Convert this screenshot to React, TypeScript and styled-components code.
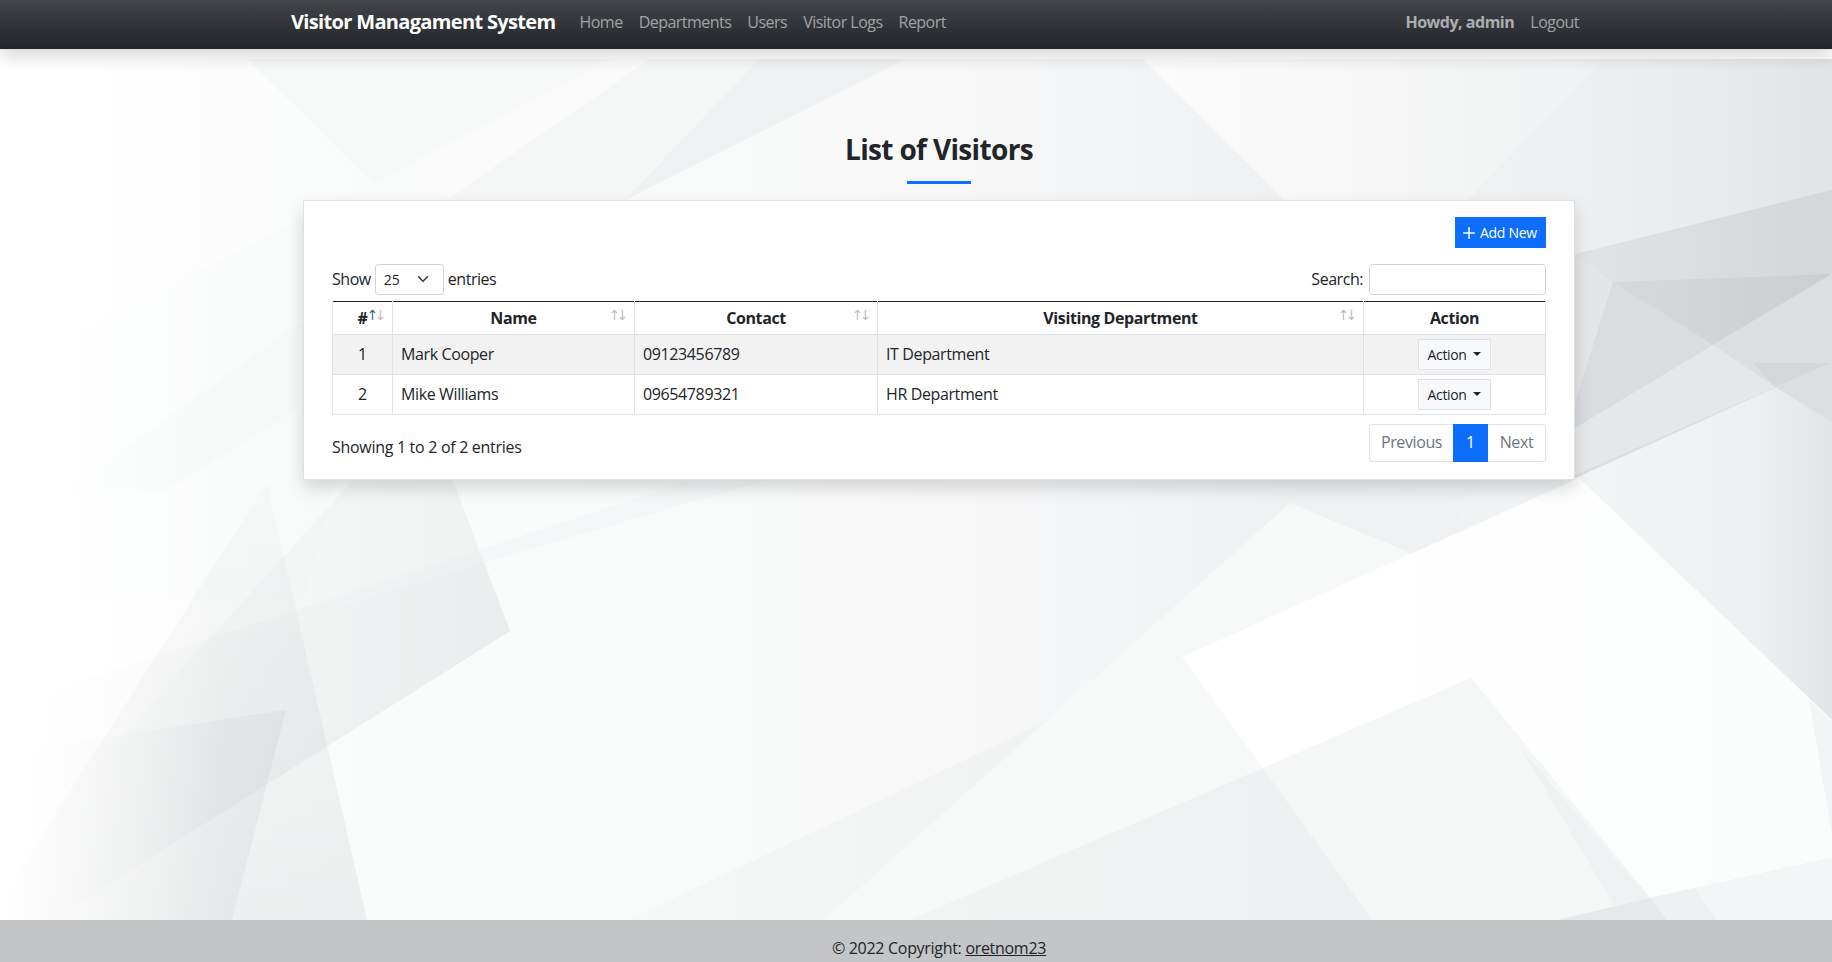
import React from 'react';
import styled, { createGlobalStyle } from 'styled-components';
import { Plus } from 'lucide-react';

const GlobalStyle = createGlobalStyle`
  html, body {
    margin: 0;
    padding: 0;
    height: 100%;
    overflow: hidden;
    background: #ffffff;
  }
  body {
    font-family: "Open Sans", "Noto Sans", "Liberation Sans", sans-serif;
    font-size: 16px;
    line-height: 24px;
    letter-spacing: -0.38px;
    color: #212529;
  }
`;

const Page = styled.div`
  display: flex;
  flex-direction: column;
  height: 962px;
  overflow: hidden;
`;

const Navbar = styled.nav`
  position: relative;
  z-index: 2;
  box-sizing: border-box;
  flex: 0 0 49px;
  display: flex;
  align-items: center;
  padding: 0 253px 6px 291px;
  background: #212529 linear-gradient(180deg, rgba(255, 255, 255, 0.15), rgba(255, 255, 255, 0));
  box-shadow: 0 8px 16px rgba(0, 0, 0, 0.15);
`;

const Brand = styled.a`
  color: #ffffff;
  font-size: 20px;
  font-weight: 700;
  letter-spacing: -0.66px;
  margin-right: 24px;
`;

const NavLinks = styled.div`
  display: flex;
  flex: 1;
  gap: 16px;
`;

const NavLink = styled.a`
  color: rgba(255, 255, 255, 0.55);
  letter-spacing: -0.52px;
`;

const Greeting = styled.span`
  color: rgba(255, 255, 255, 0.6);
  font-weight: 700;
  margin-right: 16px;
  letter-spacing: -0.48px;
`;

const Main = styled.main`
  position: relative;
  flex: 1;
  padding: 83px 0 0 303px;
`;

const Backdrop = styled.svg`
  position: absolute;
  left: 0;
  top: 10px;
  width: 1832px;
  height: 861px;
`;

const Content = styled.div`
  position: relative;
  width: 1272px;
`;

const Title = styled.h3`
  margin: 0;
  text-align: center;
  font-size: 28px;
  line-height: 34px;
  font-weight: 700;
  letter-spacing: -0.66px;
`;

const TitleRule = styled.div`
  width: 64px;
  height: 3px;
  margin: 15px auto 16px;
  background: #0d6efd;
`;

const Card = styled.section`
  box-sizing: border-box;
  height: 280px;
  padding: 16px 28px 0;
  background: #ffffff;
  border: 1px solid rgba(0, 0, 0, 0.125);
  box-shadow: 0 8px 16px rgba(0, 0, 0, 0.15);
`;

const CardTools = styled.div`
  display: flex;
  justify-content: flex-end;
  margin-bottom: 16px;
`;

const AddButton = styled.button`
  display: inline-flex;
  align-items: center;
  gap: 2px;
  box-sizing: border-box;
  width: 91px;
  height: 31px;
  padding: 0 0 0 5px;
  border: 0;
  background: #0d6efd;
  color: #ffffff;
  font: inherit;
  font-size: 14px;
  letter-spacing: -0.3px;
`;

const FilterRow = styled.div`
  display: flex;
  justify-content: space-between;
  align-items: center;
  margin-bottom: 6px;
`;

const FilterLabel = styled.label`
  display: flex;
  align-items: center;
  gap: 4px;
  padding-bottom: 2px;
  letter-spacing: -0.46px;
`;

const SelectWrap = styled.span`
  position: relative;
  display: block;
  width: 69px;
  height: 31px;
  margin-bottom: -2px;
`;

const PageSize = styled.select`
  box-sizing: border-box;
  display: block;
  width: 100%;
  height: 100%;
  padding: 0 0 0 8px;
  appearance: none;
  background: #ffffff;
  border: 1px solid #ced4da;
  border-radius: 3.2px;
  color: #212529;
  font: inherit;
  font-size: 14px;
`;

const Chevron = styled.svg`
  position: absolute;
  right: 13px;
  top: 9px;
  width: 16px;
  height: 12px;
  pointer-events: none;
`;

const SearchInput = styled.input`
  box-sizing: border-box;
  width: 177px;
  height: 31px;
  margin: 0 0 -2px 2px;
  background: #ffffff;
  border: 1px solid #ced4da;
  border-radius: 3.2px;
`;

const Table = styled.table`
  box-sizing: border-box;
  width: 1213px;
  table-layout: fixed;
  border-collapse: collapse;
  border-top: 1px solid #212529;
`;

const HeadCell = styled.th<{ $w: number; $sortable?: boolean; $active?: boolean }>`
  position: relative;
  box-sizing: border-box;
  width: ${(p) => p.$w}px;
  height: 33px;
  padding: 0 8px;
  border: 1px solid #dee2e6;
  border-top: 0;
  background: #ffffff;
  font-weight: 700;
  text-align: center;
  ${(p) =>
    p.$sortable &&
    `
    &::before, &::after {
      position: absolute;
      top: 0;
      font-family: "DejaVu Sans", sans-serif;
      font-weight: 400;
      font-size: 14px;
      line-height: 26px;
      letter-spacing: 0;
    }
    &::before {
      content: "\\2191";
      right: 13.6px;
      opacity: ${p.$active ? 0.9 : 0.3};
      color: ${p.$active ? '#1f5d7a' : 'inherit'};
    }
    &::after {
      content: "\\2193";
      right: 5.6px;
      opacity: 0.3;
    }
  `}
`;

const BodyRow = styled.tr<{ $striped?: boolean }>`
  background: ${(p) => (p.$striped ? '#f2f2f2' : '#ffffff')};
`;

const Cell = styled.td<{ $center?: boolean; $button?: boolean }>`
  box-sizing: border-box;
  height: 40px;
  padding: 0 8px ${(p) => (p.$button ? '0' : '2px')};
  border: 1px solid #dee2e6;
  text-align: ${(p) => (p.$center ? 'center' : 'left')};
  vertical-align: middle;
`;

const ActionButton = styled.button`
  display: inline-flex;
  align-items: center;
  justify-content: center;
  gap: 7px;
  box-sizing: border-box;
  width: 73px;
  height: 31px;
  padding: 0;
  vertical-align: middle;
  background: #f8f9fa;
  border: 1px solid #dee2e6;
  color: #212529;
  font: inherit;
  font-size: 14px;
  letter-spacing: -0.38px;
  &::after {
    content: "";
    margin-bottom: 2px;
    border-top: 4.5px solid currentColor;
    border-left: 4px solid transparent;
    border-right: 4px solid transparent;
  }
`;

const TableFooter = styled.div`
  display: flex;
  justify-content: space-between;
  align-items: flex-start;
  margin-top: 9px;
`;

const Info = styled.div`
  padding-top: 11px;
  letter-spacing: -0.3px;
`;

const Pager = styled.div`
  display: flex;
  height: 38px;
`;

const PageLink = styled.a<{ $w: number; $active?: boolean; $pos?: 'first' | 'last' }>`
  box-sizing: border-box;
  display: flex;
  align-items: center;
  justify-content: center;
  width: ${(p) => p.$w}px;
  padding-bottom: 2px;
  color: ${(p) => (p.$active ? '#ffffff' : '#6c757d')};
  background: ${(p) => (p.$active ? '#0d6efd' : '#ffffff')};
  border: 1px solid ${(p) => (p.$active ? '#0d6efd' : '#dee2e6')};
  border-left-width: ${(p) => (p.$pos === 'last' ? 0 : '1px')};
  border-right-width: ${(p) => (p.$pos === 'first' ? 0 : '1px')};
  border-radius: ${(p) =>
    p.$pos === 'first' ? '4px 0 0 4px' : p.$pos === 'last' ? '0 4px 4px 0' : '0'};
`;

const Footer = styled.footer`
  position: relative;
  flex: 0 0 42px;
  box-sizing: border-box;
  padding: 16px 0 0 303px;
  background: #c4c5c7;
`;

const FooterText = styled.div`
  width: 1272px;
  text-align: center;
  letter-spacing: -0.3px;
  a {
    color: inherit;
    text-decoration: underline;
  }
`;

const shapes: [string, string][] = [
  // top of the page
  ['247,59 612,59 400,210 390,200', '#f7f8f8'],
  ['650,59 759,59 625,200 446,200', '#f5f6f6'],
  ['759,59 906,59 625,200', '#f0f1f2'],
  ['612,59 650,59 446,200 341,200', '#fbfbfb'],
  ['1143,59 1602,59 1440,230 1350,265', 'url(#topLight)'],
  // right, beside the card
  ['1527,500 1832,362 1832,760 1500,760', 'url(#rightLow)'],
  ['1500,273 1832,190 1832,362 1527,500 1500,512', '#dcdfe1'],
  ['1500,273 1832,190 1832,274 1613,282 1575,255', 'url(#rightBand)'],
  ['1613,282 1832,274 1713,345', 'url(#rightDark)'],
  ['1575,255 1613,282 1575,403', '#e3e5e7'],
  ['1613,282 1713,345 1575,428 1575,403', '#dadde0'],
  ['1713,345 1832,274 1832,363 1753,363', '#dcdfe1'],
  ['1753,363 1832,363 1775,387', '#d5d8db'],
  ['1713,345 1775,387 1575,475 1575,428', '#e5e7e9'],
  ['1775,387 1832,363 1832,422', '#dcdfe1'],
  // middle and lower right
  ['628,920 1182,657 1372,920', 'url(#lowMid)'],
  ['1290,503 1500,590 1263,768 910,920 824,920', '#f7f8f8'],
  ['1488,480 1453,503 1468,528 1579,478', '#f1f2f3'],
  ['1263,768 1471,678 1667,920 1372,920', '#f5f6f6'],
  ['1520,747 1667,920 1623,920', '#eff1f2'],
  ['1182,657 1579,478 1832,720 1832,858 1650,898 1471,678 1263,768', 'url(#whiteShape)'],
  ['1650,898 1832,858 1832,920 1667,920', '#f4f5f6'],
  ['1557,920 1650,898 1667,920', '#e6e9ea'],
  ['1650,898 1695,888 1717,920 1667,920', '#eff0f2'],
  ['1809,700 1832,722 1832,833', '#f3f4f5'],
  // left, below the card
  ['420,160 40,350 0,600 304,600', 'rgba(120,130,140,0.012)'],
  ['300,323 67,490 167,490 300,407', 'rgba(120,130,140,0.02)'],
  ['695,479 771,479 105,673', 'rgba(143,151,156,0.035)'],
  ['362,470 449,470 510,631 52,920 0,920 0,870', 'url(#leftGrey)'],
  ['484,563 105,673 0,703 0,920 52,920 510,631', 'url(#leftSoft)'],
  ['267,483 367,920 0,920 0,900', 'url(#leftSpike)'],
  ['286,710 0,753 0,920 232,920', 'url(#leftDark)'],
];

const BackdropArt: React.FC = () => (
  <Backdrop viewBox="0 59 1832 861" aria-hidden="true">
    <defs>
      <linearGradient id="base" x1="0" x2="1" y1="0" y2="0">
        <stop offset="0" stopColor="#ffffff" />
        <stop offset="0.08" stopColor="#fdfdfd" />
        <stop offset="0.2" stopColor="#fafbfb" />
        <stop offset="0.4" stopColor="#f9fafa" />
        <stop offset="0.5" stopColor="#f8f8f9" />
        <stop offset="0.6" stopColor="#f4f5f6" />
        <stop offset="0.7" stopColor="#f0f1f2" />
        <stop offset="0.85" stopColor="#eef0f1" />
        <stop offset="0.93" stopColor="#e9ebec" />
        <stop offset="1" stopColor="#e1e3e5" />
      </linearGradient>
      <linearGradient id="topLight" gradientUnits="userSpaceOnUse" x1="1143" x2="1602" y1="0" y2="0">
        <stop offset="0" stopColor="#fcfcfc" />
        <stop offset="1" stopColor="#f0f1f2" />
      </linearGradient>
      <linearGradient id="rightLow" gradientUnits="userSpaceOnUse" x1="1580" x2="1832" y1="0" y2="0">
        <stop offset="0" stopColor="#f3f4f5" />
        <stop offset="0.7" stopColor="#eeeff0" />
        <stop offset="1" stopColor="#e2e4e6" />
      </linearGradient>
      <linearGradient id="rightBand" gradientUnits="userSpaceOnUse" x1="1575" x2="1832" y1="0" y2="0">
        <stop offset="0" stopColor="#e1e3e5" />
        <stop offset="1" stopColor="#d4d7da" />
      </linearGradient>
      <linearGradient id="rightDark" gradientUnits="userSpaceOnUse" x1="1613" x2="1832" y1="0" y2="0">
        <stop offset="0" stopColor="#d6d9db" />
        <stop offset="1" stopColor="#cbcfd2" />
      </linearGradient>
      <linearGradient id="lowMid" gradientUnits="userSpaceOnUse" x1="628" x2="1372" y1="0" y2="0">
        <stop offset="0" stopColor="#f6f7f7" />
        <stop offset="1" stopColor="#edeff0" />
      </linearGradient>
      <linearGradient id="whiteShape" gradientUnits="userSpaceOnUse" x1="1182" x2="1832" y1="0" y2="0">
        <stop offset="0" stopColor="#ffffff" />
        <stop offset="1" stopColor="#fbfcfc" />
      </linearGradient>
      <linearGradient id="leftGrey" gradientUnits="userSpaceOnUse" x1="0" x2="520" y1="0" y2="0">
        <stop offset="0" stopColor="#8f979c" stopOpacity="0" />
        <stop offset="1" stopColor="#8f979c" stopOpacity="0.09" />
      </linearGradient>
      <linearGradient id="leftSoft" gradientUnits="userSpaceOnUse" x1="0" x2="520" y1="0" y2="0">
        <stop offset="0" stopColor="#8f979c" stopOpacity="0.02" />
        <stop offset="1" stopColor="#8f979c" stopOpacity="0.06" />
      </linearGradient>
      <linearGradient id="leftSpike" gradientUnits="userSpaceOnUse" x1="0" x2="40" y1="483" y2="920">
        <stop offset="0" stopColor="#8f979c" stopOpacity="0.025" />
        <stop offset="1" stopColor="#8f979c" stopOpacity="0.13" />
      </linearGradient>
      <linearGradient id="leftDark" gradientUnits="userSpaceOnUse" x1="0" x2="290" y1="0" y2="0">
        <stop offset="0" stopColor="#8f979c" stopOpacity="0.01" />
        <stop offset="1" stopColor="#8f979c" stopOpacity="0.1" />
      </linearGradient>
      <linearGradient id="leftFade" gradientUnits="userSpaceOnUse" x1="0" x2="220" y1="0" y2="0">
        <stop offset="0" stopColor="#ffffff" stopOpacity="1" />
        <stop offset="0.3" stopColor="#ffffff" stopOpacity="0.65" />
        <stop offset="1" stopColor="#ffffff" stopOpacity="0" />
      </linearGradient>
    </defs>
    <rect x="0" y="59" width="1832" height="861" fill="url(#base)" />
    {shapes.map(([points, fill]) => (
      <polygon key={points} points={points} fill={fill} />
    ))}
    <rect x="0" y="59" width="220" height="861" fill="url(#leftFade)" />
  </Backdrop>
);

const visitors = [
  { id: 1, name: 'Mark Cooper', contact: '09123456789', dept: 'IT Department' },
  { id: 2, name: 'Mike Williams', contact: '09654789321', dept: 'HR Department' },
];

const App: React.FC = () => (
  <Page>
    <GlobalStyle />
    <Navbar>
      <Brand>Visitor Managament System</Brand>
      <NavLinks>
        <NavLink>Home</NavLink>
        <NavLink>Departments</NavLink>
        <NavLink>Users</NavLink>
        <NavLink>Visitor Logs</NavLink>
        <NavLink>Report</NavLink>
      </NavLinks>
      <Greeting>Howdy, admin</Greeting>
      <NavLink>Logout</NavLink>
    </Navbar>

    <Main>
      <BackdropArt />
      <Content>
        <Title>List of Visitors</Title>
        <TitleRule />
        <Card>
          <CardTools>
            <AddButton>
              <Plus size={18} strokeWidth={2} />
              Add New
            </AddButton>
          </CardTools>
          <FilterRow>
            <FilterLabel>
              Show
              <SelectWrap>
                <PageSize defaultValue="25">
                  <option value="10">10</option>
                  <option value="25">25</option>
                  <option value="50">50</option>
                  <option value="100">100</option>
                </PageSize>
                <Chevron viewBox="0 0 16 16">
                  <path
                    d="M2 5l6 6 6-6"
                    fill="none"
                    stroke="#343a40"
                    strokeWidth="2"
                    strokeLinecap="round"
                    strokeLinejoin="round"
                  />
                </Chevron>
              </SelectWrap>
              entries
            </FilterLabel>
            <FilterLabel>
              Search:
              <SearchInput type="search" />
            </FilterLabel>
          </FilterRow>
          <Table>
            <thead>
              <tr>
                <HeadCell $w={60} $sortable $active>#</HeadCell>
                <HeadCell $w={242} $sortable>Name</HeadCell>
                <HeadCell $w={243} $sortable>Contact</HeadCell>
                <HeadCell $w={486} $sortable>Visiting Department</HeadCell>
                <HeadCell $w={182}>Action</HeadCell>
              </tr>
            </thead>
            <tbody>
              {visitors.map((v, i) => (
                <BodyRow key={v.id} $striped={i % 2 === 0}>
                  <Cell $center>{v.id}</Cell>
                  <Cell>{v.name}</Cell>
                  <Cell>{v.contact}</Cell>
                  <Cell>{v.dept}</Cell>
                  <Cell $center $button>
                    <ActionButton>Action</ActionButton>
                  </Cell>
                </BodyRow>
              ))}
            </tbody>
          </Table>
          <TableFooter>
            <Info>Showing 1 to 2 of 2 entries</Info>
            <Pager>
              <PageLink $w={84} $pos="first">Previous</PageLink>
              <PageLink $w={35} $active>1</PageLink>
              <PageLink $w={58} $pos="last">Next</PageLink>
            </Pager>
          </TableFooter>
        </Card>
      </Content>
    </Main>

    <Footer>
      <FooterText>
        © 2022 Copyright: <a>oretnom23</a>
      </FooterText>
    </Footer>
  </Page>
);

export default App;
